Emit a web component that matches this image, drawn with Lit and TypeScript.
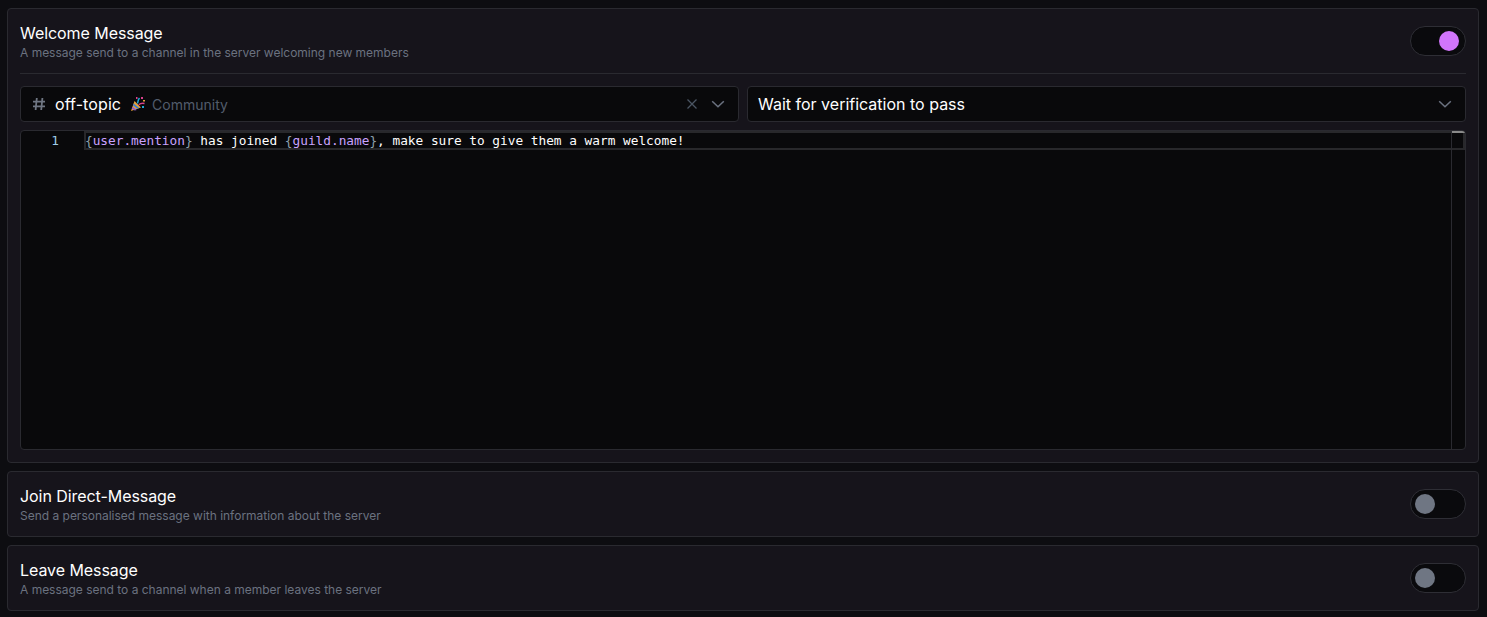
import { LitElement, html, css } from "lit";
import { customElement } from "lit/decorators.js";

const chevron = html`<svg class="chev" viewBox="0 0 14 8" width="14" height="8"><path d="M1.200 1.200 7 6.800l5.800-5.600" fill="none" stroke="currentColor" stroke-width="1.500"/></svg>`;

@customElement("app-root")
export class AppRoot extends LitElement {
  static styles = css`
    :host { display: block; height: 617px; overflow: hidden; background: #0d0d11; font-family: Inter, "Noto Sans", sans-serif; color: #fff; }
    * { box-sizing: border-box; }
    .page { display: flex; flex-direction: column; gap: 8px; padding: 8px 8px 0 7px; }
    .card { border: 1px solid #2a2a30; border-radius: 4px; background: #16141b; padding: 0 12px; }
    .head { display: flex; align-items: center; justify-content: space-between; height: 64px; }
    .open .head { height: 65px; border-bottom: 1px solid #2a2a30; }
    .title { font-size: 16px; line-height: 24px; font-weight: 400; letter-spacing: -0.06px; }
    .desc { font-size: 12px; line-height: 16px; color: #6b7280; letter-spacing: -0.01px; }
    .toggle { width: 56px; height: 30px; border-radius: 15px; background: #0a0a0d; border: 1px solid #2e2e35; display: flex; align-items: center; padding: 0 6px 0 4px; }
    .on { justify-content: flex-end; }
    .knob { width: 20px; height: 20px; border-radius: 50%; background: #6f7683; }
    .on .knob { background: #d175fb; }
    .selects { display: grid; grid-template-columns: 719px 719px; gap: 8px; margin-top: 12px; }
    .select { height: 36px; background: #09090b; border: 1px solid #2a2a30; border-radius: 4px; display: flex; align-items: center; padding: 0 13px 0 10px; color: #fff; }
    .select .hash { color: #6f7683; margin: 0 9px 0 1px; display: flex; }
    .name { font-size: 16px; font-weight: 400; letter-spacing: 0.1px; }
    .popper { margin: 0 6px 0 9px; display: flex; }
    .cat { font-size: 14px; color: #525c6b; }
    .wait { font-size: 16px; }
    .grow { flex: 1; }
    .x { color: #4b5563; margin-right: 13px; display: flex; }
    .chev { color: #6b7280; display: block; }
    .editor { margin-top: 8px; margin-bottom: 12px; height: 320px; background: #09090b; border: 1px solid #2a2a30; border-radius: 4px; position: relative; overflow: hidden; font-family: "DejaVu Sans Mono", monospace; font-size: 12.77px; }
    .line { height: 19px; display: flex; align-items: center; white-space: pre; color: #fff; }
    .num { width: 64px; flex: none; color: #9fcbe8; text-align: right; padding-right: 26px; }
    .code { flex: 1; height: 19px; line-height: 19px; }
    .highlight { position: absolute; left: 63px; right: 0; top: 0; height: 19px; border: 2px solid #28282b; pointer-events: none; }
    .b { color: #8ea0ac; }
    .v { color: #c9a2ff; }
    .scroll { position: absolute; top: 0; right: 0; bottom: 0; width: 14px; border-left: 1px solid #2a2a30; }
    .thumb { position: absolute; top: 0; left: 0; right: 0; height: 2px; background: #8a8a8a; }
  `;

  private head(title: string, desc: string, on: boolean) {
    return html`<div class="head">
      <div><div class="title">${title}</div><div class="desc">${desc}</div></div>
      <div class="toggle ${on ? "on" : ""}"><div class="knob"></div></div>
    </div>`;
  }

  render() {
    return html`<div class="page">
      <section class="card open">
        ${this.head("Welcome Message", "A message send to a channel in the server welcoming new members", true)}
        <div class="selects">
          <div class="select">
            <span class="hash"><svg viewBox="0 0 14 14" width="14" height="14"><path d="M4.800 1 3.600 13M10.400 1 9.200 13M1 4.700h12M1 9.300h12" fill="none" stroke="currentColor" stroke-width="1.800"/></svg></span>
            <span class="name">off-topic</span>
            <span class="popper"><svg viewBox="0 0 16 16" width="16" height="16">
              <path d="M1 15 4.500 5l6.500 6.500z" fill="#e6a13a"/>
              <path d="M2.500 10.700 6.800 14 4.700 14.600 1.800 12.600z" fill="#8e5bd0"/>
              <path d="M3.700 7.400 9.200 12 7.300 12.800 3 9.200z" fill="#3f7fd0"/>
              <path d="M7.500 7.500c.6-2 .3-3.500 2-5.500" fill="none" stroke="#1fa8d8" stroke-width="1.500"/>
              <path d="M8.800 8.800c1.500-1.500 3-1.800 5.700-1.300" fill="none" stroke="#d9408c" stroke-width="1.500"/>
              <rect x="11" y="1" width="2" height="2" fill="#d9408c"/><rect x="13" y="4" width="2" height="1.500" fill="#e6a13a"/><rect x="6" y="1" width="1.500" height="2" fill="#d9408c"/><rect x="12" y="10" width="2" height="2" fill="#1fa8d8"/>
            </svg></span>
            <span class="cat">Community</span>
            <span class="grow"></span>
            <span class="x"><svg viewBox="0 0 12 12" width="12" height="12"><path d="M1.500 1.500l9 9m0-9-9 9" fill="none" stroke="currentColor" stroke-width="1.300"/></svg></span>
            ${chevron}
          </div>
          <div class="select">
            <span class="wait">Wait for verification to pass</span>
            <span class="grow"></span>
            ${chevron}
          </div>
        </div>
        <div class="editor">
          <div class="highlight"></div>
          <div class="line">
            <span class="num">1</span>
            <span class="code"><span class="b">{</span><span class="v">user.mention</span><span class="b">}</span> has joined <span class="b">{</span><span class="v">guild.name</span><span class="b">}</span>, make sure to give them a warm welcome!</span>
          </div>
          <div class="scroll"><div class="thumb"></div></div>
        </div>
      </section>
      <section class="card">${this.head("Join Direct-Message", "Send a personalised message with information about the server", false)}</section>
      <section class="card">${this.head("Leave Message", "A message send to a channel when a member leaves the server", false)}</section>
    </div>`;
  }
}
